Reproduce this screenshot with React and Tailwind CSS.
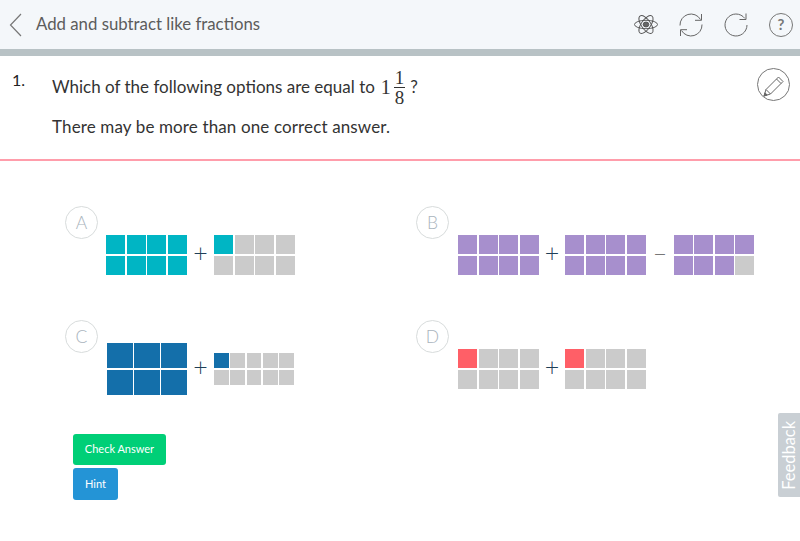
import React from 'react';

const TEAL = 'bg-[#00b5c4]';
const BLUE = 'bg-[#146faa]';
const PURPLE = 'bg-[#a78fcd]';
const RED = 'bg-[#ff5f67]';
const GRAY = 'bg-[#cbcbcb]';

const Bar = ({ cols, fill, cellClass = TEAL, className }) => {
  const cells = [];
  for (let i = 0; i < cols * 2; i++) {
    cells.push(<div key={i} className={i < fill ? cellClass : GRAY}></div>);
  }
  return (
    <div
      className={`grid grid-rows-2 gap-[1.5px] shrink-0 ${className}`}
      style={{ gridTemplateColumns: `repeat(${cols}, 1fr)` }}
    >
      {cells}
    </div>
  );
};

const Sign = ({ children, className = 'w-[27px] text-[#1f3f58]' }) => (
  <div className={`${className} pb-[5px] text-center text-[25px] font-light leading-none shrink-0`}>{children}</div>
);

const Option = ({ letter, indent = 'ml-[41px]', children }) => (
  <div className="flex flex-col">
    <div className="w-[33px] h-[33px] rounded-full border border-[#d8dcdc] flex items-center justify-center pt-[2px] text-[17.5px] font-light text-[#a9b4bd] bg-white">
      {letter}
    </div>
    <div className={`h-[52px] -mt-[10px] ${indent} flex items-center`}>{children}</div>
  </div>
);

const Atom = () => (
  <svg width="24" height="21" viewBox="0 0 24 24" preserveAspectRatio="none" fill="none" stroke="#555" strokeWidth="1">
    <ellipse cx="12" cy="12" rx="11.5" ry="4.8" />
    <ellipse cx="12" cy="12" rx="11.5" ry="4.8" transform="rotate(60 12 12)" />
    <ellipse cx="12" cy="12" rx="11.5" ry="4.8" transform="rotate(120 12 12)" />
    <circle cx="12" cy="12" r="2.8" fill="#666" />
  </svg>
);

const Sync = () => (
  <svg width="24" height="24" viewBox="0 0 24 24" fill="none" stroke="#666" strokeWidth="1">
    <path d="M1 12.5A11 11 0 0 1 21.5 6.5" />
    <path d="M22.5 1v6.3h-6.5" />
    <path d="M23 11.5A11 11 0 0 1 2.5 17.5" />
    <path d="M1.5 23v-6.3h6.5" />
  </svg>
);

const Redo = () => (
  <svg width="24" height="24" viewBox="0 0 24 24" fill="none" stroke="#666" strokeWidth="1">
    <path d="M23 12A11 11 0 1 1 20.8 5.4" />
    <path d="M22 0.5v6h-6.5" />
  </svg>
);

const Pencil = () => (
  <svg width="33" height="33" viewBox="0 0 33 33" fill="none" stroke="#666" strokeWidth="1">
    <circle cx="16.5" cy="16.5" r="16" stroke="#777" />
    <path d="M7 28l2-6.5L21.5 9l4.5 4.5L13.5 26z" />
    <path d="M19.5 11l4.5 4.5M9 21.5l4.5 4.5" />
    <path d="M7 28l1-3.2 2.2 2.2z" fill="#666" />
  </svg>
);

export default function App() {
  return (
    <div className="relative h-[541px] w-[800px] overflow-hidden bg-white font-['Lato',sans-serif]">
      {/* Header */}
      <div className="h-[49px] bg-[#f4f7fa] flex items-center pl-[9px] pr-[7px]">
        <svg width="13" height="24" viewBox="0 0 13 24" fill="none" stroke="#777" strokeWidth="1.2">
          <path d="M12 1L1.5 12 12 23" />
        </svg>
        <div className="ml-[14px] pb-[2px] text-[16.8px] text-[#5c5c5c] flex-1">Add and subtract like fractions</div>
        <div className="flex items-center gap-[21px]">
          <Atom />
          <Sync />
          <Redo />
          <div className="w-[24px] h-[24px] rounded-full border border-[#777] flex items-center justify-center text-[15px] font-bold text-[#777]">?</div>
        </div>
      </div>
      <div className="h-[7px] bg-[#b8c2c5]"></div>

      {/* Question */}
      <div className="h-[105px] border-b-2 border-[#ff9dab] flex pl-[12px] pr-[10px]">
        <div className="w-[40px] pt-[14px] text-[16px] text-[#222] leading-5">1.</div>
        <div className="flex-1 pt-[10px] text-[17px] text-[#333]">
          <div className="flex items-center h-[42px]">
            <span>Which of the following options are equal to</span>
            <span className="ml-[6px] text-[20px] font-['Liberation_Serif',serif]">1</span>
            <span className="ml-[3px] inline-flex flex-col items-center text-[19px] leading-[17px] font-['Liberation_Serif',serif]">
              <span className="px-[1px] h-[19px] border-b border-[#333]">1</span>
              <span className="px-[1px] pt-[1px]">8</span>
            </span>
            <span className="ml-[5px]">?</span>
          </div>
          <div className="mt-[9px] leading-5 tracking-[0.13px]">There may be more than one correct answer.</div>
        </div>
        <div className="pt-[12px]"><Pencil /></div>
      </div>

      {/* Options */}
      <div className="pt-[45px] pl-[65px] grid grid-cols-[351px_1fr] gap-y-[39px]">
        <Option letter="A">
          <Bar cols={4} fill={8} className="w-[81px] h-[40px]" />
          <Sign>+</Sign>
          <Bar cols={4} fill={1} className="w-[81px] h-[40px]" />
        </Option>
        <Option letter="B" indent="ml-[42px]">
          <Bar cols={4} fill={8} cellClass={PURPLE} className="w-[81px] h-[40px]" />
          <Sign className="w-[26px] text-[#1f3f58]">+</Sign>
          <Bar cols={4} fill={8} cellClass={PURPLE} className="w-[81px] h-[40px]" />
          <Sign className="w-[28px] text-[#777]">–</Sign>
          <Bar cols={4} fill={7} cellClass={PURPLE} className="w-[80px] h-[40px]" />
        </Option>
        <Option letter="C">
          <Bar cols={3} fill={6} cellClass={BLUE} className="w-[80px] h-[52px] ml-[1px]" />
          <Sign>+</Sign>
          <Bar cols={5} fill={1} cellClass={BLUE} className="w-[80px] h-[32px]" />
        </Option>
        <Option letter="D" indent="ml-[42px]">
          <Bar cols={4} fill={1} cellClass={RED} className="w-[81px] h-[40px]" />
          <Sign className="w-[26px] text-[#1f3f58]">+</Sign>
          <Bar cols={4} fill={1} cellClass={RED} className="w-[81px] h-[40px]" />
        </Option>
      </div>

      {/* Buttons */}
      <div className="mt-[39px] ml-[73px] flex flex-col items-start gap-[3px]">
        <button className="w-[93px] h-[31px] rounded-[3px] bg-[#00cf77] text-white text-[11px]">Check Answer</button>
        <button className="w-[45px] h-[32px] rounded-[3px] bg-[#2494d6] text-white text-[11px]">Hint</button>
      </div>

      {/* Feedback tab */}
      <div className="absolute right-0 top-[413px] w-[22px] h-[84px] rounded-tl-[2px] rounded-bl-[2px] bg-[#c9cfd4] flex items-center justify-center">
        <span className="-rotate-90 text-[16.5px] text-white whitespace-nowrap">Feedback</span>
      </div>
    </div>
  );
}
